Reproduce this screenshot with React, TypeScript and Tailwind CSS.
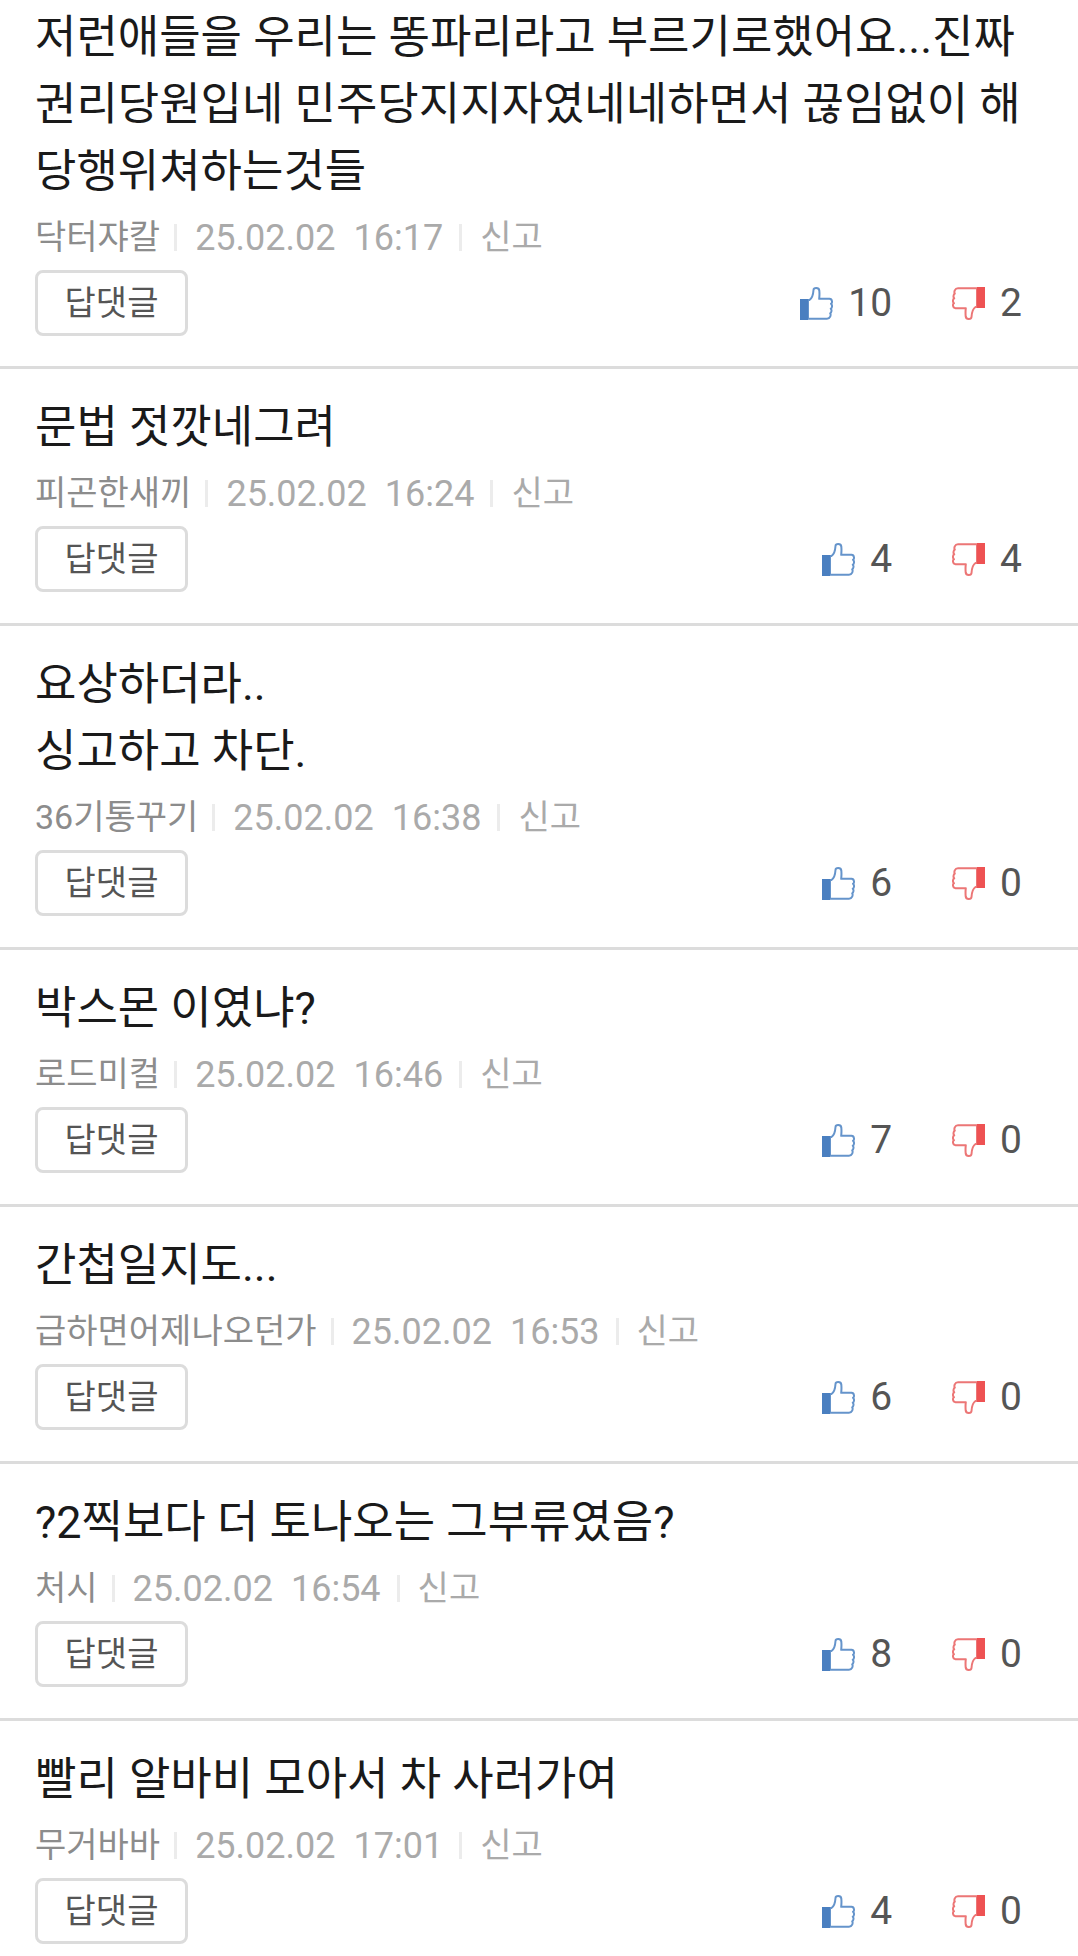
interface Comment {
  id: number;
  lines: string[];
  author: string;
  date: string;
  time: string;
  up: number;
  down: number;
}

const comments: Comment[] = [
  {
    id: 1,
    lines: ["저런애들을 우리는 똥파리라고 부르기로했어요...진짜 권리당원입네 민주당지지자였네네하면서 끊임없이 해당행위쳐하는것들"],
    author: "닥터쟈칼",
    date: "25.02.02",
    time: "16:17",
    up: 10,
    down: 2,
  },
  { id: 2, lines: ["문법 젓깟네그려"], author: "피곤한새끼", date: "25.02.02", time: "16:24", up: 4, down: 4 },
  { id: 3, lines: ["요상하더라..", "싱고하고 차단."], author: "36기통꾸기", date: "25.02.02", time: "16:38", up: 6, down: 0 },
  { id: 4, lines: ["박스몬 이였냐?"], author: "로드미컬", date: "25.02.02", time: "16:46", up: 7, down: 0 },
  { id: 5, lines: ["간첩일지도..."], author: "급하면어제나오던가", date: "25.02.02", time: "16:53", up: 6, down: 0 },
  { id: 6, lines: ["?2찍보다 더 토나오는 그부류였음?"], author: "처시", date: "25.02.02", time: "16:54", up: 8, down: 0 },
  { id: 7, lines: ["빨리 알바비 모아서 차 사러가여"], author: "무거바바", date: "25.02.02", time: "17:01", up: 4, down: 0 },
];

function ThumbUp() {
  return (
    <svg className="h-[33px] w-[33px]" viewBox="0 0 33 33" aria-hidden="true">
      <path
        d="M8 13 H9.500 C12.500 11 13.200 8 13.500 3 C13.700 .5 18.800 .2 19.300 3.500 C19.600 6.500 19.500 9 19.200 11.800 H29.500 C32.500 12 32.500 16 31 16.800 C32.500 18 32.300 21 30.800 21.700 C32 23 31.600 25.600 30.200 26.300 C31.200 28 30.300 31.700 27 31.700 H8 Z"
        fill="#fff"
        stroke="#6594cb"
        strokeWidth="2"
        strokeLinejoin="round"
      />
      <path d="M0 12 H8 V33 H0 Z" fill="#4a7fc0" />
    </svg>
  );
}

function ThumbDown() {
  return (
    <svg className="h-[33px] w-[33px]" viewBox="0 0 33 33" aria-hidden="true">
      <path
        d="M25 20 H23.500 C20.500 22 19.800 25 19.500 30 C19.300 32.500 14.200 32.800 13.700 29.500 C13.400 26.500 13.500 24 13.800 21.200 H3.500 C.5 21 .5 17 2 16.200 C.5 15 .7 12 2.200 11.300 C1 10 1.400 7.400 2.800 6.700 C1.800 5 2.700 1.300 6 1.300 H25 Z"
        fill="#fff"
        stroke="#ec7676"
        strokeWidth="2"
        strokeLinejoin="round"
      />
      <path d="M25 0 H33 V21 H25 Z" fill="#ee5253" />
    </svg>
  );
}

function Bar() {
  return <span className="h-[27px] w-[3px] bg-[#ececec]" />;
}

function CommentItem({ comment }: { comment: Comment }) {
  return (
    <li className="border-b-[3px] border-[#dcdcdc] px-[35px] pt-[25px] pb-[31px] first:pt-1 first:pb-[30px]">
      <div className="text-[45px] leading-[67px] break-all text-[#1a1a1a]">
        {comment.lines.map((line) => (
          <p key={line}>{line}</p>
        ))}
      </div>
      <div className="flex h-[65px] items-center text-[34px] text-[#aaa]">
        <span className="mr-[14px] text-[#8c8c8c]">{comment.author}</span>
        <Bar />
        <time className="mr-4 ml-[18px] flex gap-[18px] text-[36px]">
          <span>{comment.date}</span>
          <span>{comment.time}</span>
        </time>
        <Bar />
        <button type="button" className="ml-[18px]">신고</button>
      </div>
      <div className="flex h-[66px] items-center justify-between">
        <button type="button" className="h-full w-[153px] rounded-lg border-[3px] border-[#dcdcdc] text-[34px] text-[#555]">
          답댓글
        </button>
        <div className="flex gap-[60px] pr-[21px] text-[39px] text-[#555]">
          <button type="button" aria-label="추천" className="flex items-center gap-[15px]">
            <ThumbUp />
            {comment.up}
          </button>
          <button type="button" aria-label="비추천" className="flex items-center gap-[15px]">
            <ThumbDown />
            {comment.down}
          </button>
        </div>
      </div>
    </li>
  );
}

export default function App() {
  return (
    <main className="overflow-hidden bg-white font-[Roboto,'Noto_Sans_CJK_KR',sans-serif]" lang="ko">
      <ul>
        {comments.map((comment) => (
          <CommentItem key={comment.id} comment={comment} />
        ))}
      </ul>
    </main>
  );
}
